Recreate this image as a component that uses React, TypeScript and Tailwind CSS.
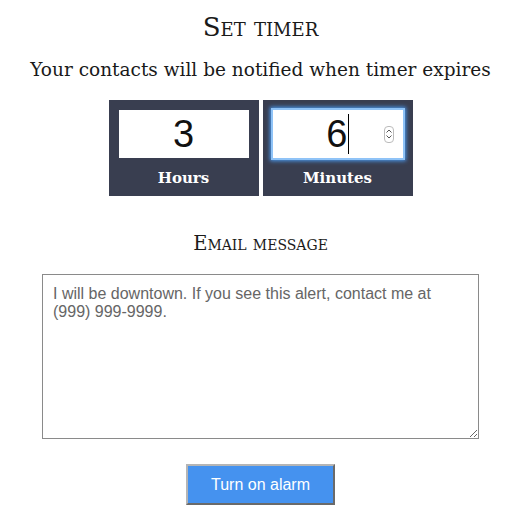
const serif = { fontFamily: '"DejaVu Serif", "Liberation Serif", serif' };

function TimeBox({ label, children }: { label: string; children: React.ReactNode }) {
  return (
    <div className="flex h-[96px] w-[150px] flex-col items-center bg-[#393e50] px-[10px] pt-[10px]">
      {children}
      <div className="mt-[10px] text-[15px] font-bold leading-[20px] text-white" style={serif}>
        {label}
      </div>
    </div>
  );
}

export default function App() {
  return (
    <div className="flex w-[521px] flex-col items-center bg-white pt-[12px] text-[#1a1a1a]">
      <h1 className="text-[26px] leading-[30px] [font-variant:small-caps]" style={serif}>
        Set timer
      </h1>
      <h2 className="mt-[15px] text-[18.5px] leading-[26px]" style={serif}>
        Your contacts will be notified when timer expires
      </h2>

      <div className="mt-[17px] flex gap-[4px]">
        <TimeBox label="Hours">
          <div className="flex h-[48px] w-[130px] items-center justify-center bg-white font-['Liberation_Sans',sans-serif] text-[38px] text-[#111]">
            3
          </div>
        </TimeBox>
        <TimeBox label="Minutes">
          <div className="flex h-[48px] w-[130px] items-center justify-end bg-white pr-[9px] font-['Liberation_Sans',sans-serif] text-[38px] text-[#111] shadow-[0_0_0_2px_#8fc3f7,0_0_4px_3px_#4a9af0]">
            <span>6</span>
            <span className="h-[40px] w-px bg-black" />
            <span className="ml-[35px] flex h-[17px] w-[10px] flex-col items-center justify-center rounded-[4px] border border-[#bbb] text-[7px] leading-[7px] text-[#555]">
              <svg width="6" height="4" viewBox="0 0 6 4">
                <path d="M0.5 3.5 L3 1 L5.5 3.5" fill="none" stroke="#555" strokeWidth="1" />
              </svg>
              <svg width="6" height="4" viewBox="0 0 6 4" className="mt-[2px]">
                <path d="M0.5 0.5 L3 3 L5.5 0.5" fill="none" stroke="#555" strokeWidth="1" />
              </svg>
            </span>
          </div>
        </TimeBox>
      </div>

      <h3 className="mt-[36px] text-[19.5px] leading-[24px] [font-variant:small-caps]" style={serif}>
        Email message
      </h3>

      <textarea
        className="mt-[18px] h-[165px] w-[437px] border border-[#8a8a8a] px-[10px] py-[10px] font-['Liberation_Sans',sans-serif] text-[16px] leading-[18px] text-[#666] outline-none"
        defaultValue="I will be downtown. If you see this alert, contact me at (999) 999-9999."
      />

      <button className="mt-[25px] h-[41px] w-[149px] border-2 border-t-[#b5b5b5] border-l-[#b5b5b5] border-b-[#6a6a6a] border-r-[#6a6a6a] bg-[#4592ef] font-['Liberation_Sans',sans-serif] text-[16px] text-white">
        Turn on alarm
      </button>
      <div className="h-[17px]" />
    </div>
  );
}
